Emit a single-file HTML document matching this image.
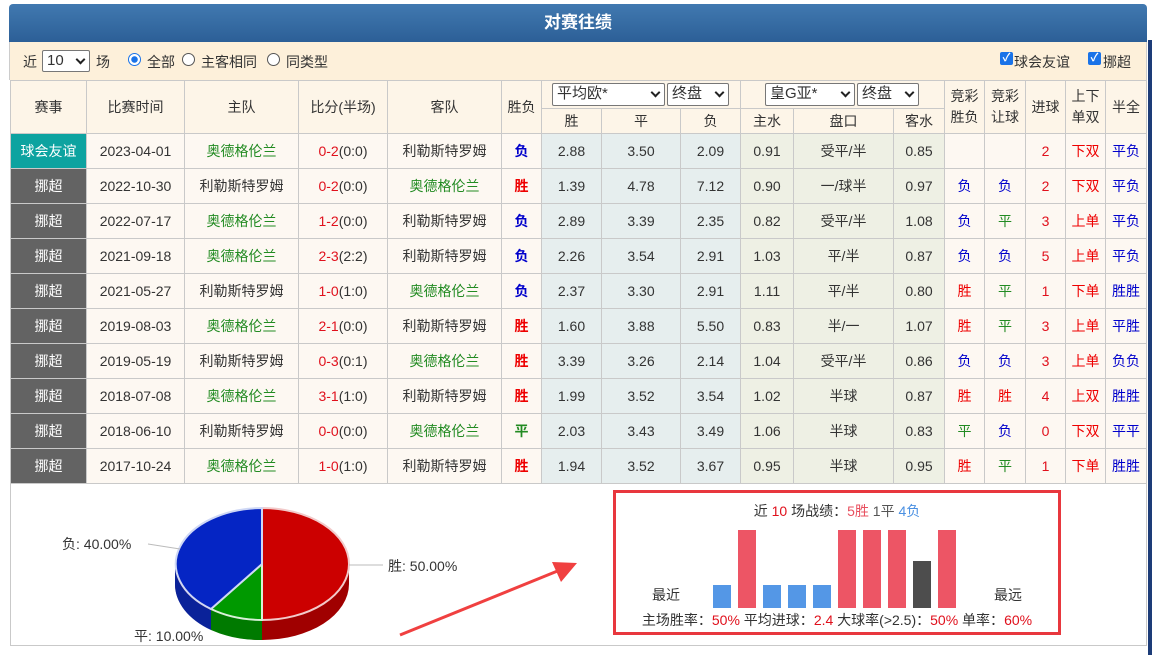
<!DOCTYPE html>
<html><head><meta charset="utf-8"><style>
*{margin:0;padding:0;box-sizing:border-box}
body{width:1152px;height:655px;background:#fff;font-family:"Liberation Sans","Noto Sans CJK SC",sans-serif;font-size:14px;color:#333;position:relative;overflow:hidden}
.strip{position:absolute;left:1148px;top:40px;width:4px;height:615px;background:#1d3c78}
.title{position:absolute;left:9px;top:4px;width:1138px;height:38px;background:linear-gradient(#4179b0,#2c5f97);border-radius:4px 4px 0 0;color:#fff;font-weight:bold;font-size:17px;text-align:center;line-height:37px}
.filter{position:absolute;left:9px;top:42px;width:1138px;height:38px;background:#fdf0da;border-left:1px solid #ccc;border-right:1px solid #ccc}
.filter span{position:absolute;top:10px;font-size:14px}
.sel{position:absolute;border:1px solid #777;background:#fff;border-radius:2px;font-size:15px;padding-left:4px;line-height:20px;height:22px;text-align:left}
.sel:after{content:"";position:absolute;right:5px;top:5px;width:5px;height:5px;border-right:2px solid #222;border-bottom:2px solid #222;transform:rotate(45deg)}
.radio{position:absolute;width:13px;height:13px;border-radius:50%;border:1px solid #555;background:#fff}
.radio.on{border:1px solid #1a73e8;background:radial-gradient(#1a73e8 3px,#fff 3.5px)}
.cb{position:absolute;width:13px;height:13px;background:#1a73e8;border-radius:2px;color:#fff;font-size:11px;line-height:13px;text-align:center;font-weight:bold}
table{position:absolute;left:10px;top:80px;border-collapse:collapse;table-layout:fixed;width:1137px}
td{border:1px solid #c9c9c9;text-align:center;font-size:14px;padding:0;white-space:nowrap;background:#fdf8f2}
tr.h td{background:#fdf5e8;color:#333}
tr.d td{height:35px}
.lg{background:#636363!important;color:#fff}
.lg2{background:#0da3a0!important;color:#fff}
.eu{background:#e6eeee!important}
.as{background:#eef0e4!important}
.g{color:#228b22}.r{color:#e00}.b{color:#00c}.rr{color:#e0101c}
.bw{font-weight:bold}
.bottom{position:absolute;left:10px;top:482px;width:1137px;height:164px;border:1px solid #c9c9c9;border-top:none}
.box{position:absolute;left:613px;top:490px;width:448px;height:145px;border:3px solid #e8373e}
.bar{position:absolute;width:18px;bottom:24px}
</style></head><body>
<div class="strip"></div>
<div class="title">对赛往绩</div>
<div class="filter">
<span style="left:13px">近</span>
<div class="sel" style="left:32px;top:8px;width:48px">10</div>
<span style="left:86px">场</span>
<div class="radio on" style="left:118px;top:11px"></div><span style="left:137px">全部</span>
<div class="radio" style="left:172px;top:11px"></div><span style="left:191px">主客相同</span>
<div class="radio" style="left:257px;top:11px"></div><span style="left:276px">同类型</span>
<div class="cb" style="left:990px;top:10px">✓</div><span style="left:1004px">球会友谊</span>
<div class="cb" style="left:1078px;top:10px">✓</div><span style="left:1093px">挪超</span>
</div>
<table>
<colgroup><col style="width:76px"><col style="width:98px"><col style="width:114px"><col style="width:89px"><col style="width:114px"><col style="width:40px"><col style="width:60px"><col style="width:79px"><col style="width:60px"><col style="width:53px"><col style="width:100px"><col style="width:51px"><col style="width:40px"><col style="width:41px"><col style="width:40px"><col style="width:40px"><col style="width:41px"></colgroup>
<tr class="h" style="height:28px"><td rowspan="2">赛事</td><td rowspan="2">比赛时间</td><td rowspan="2">主队</td><td rowspan="2">比分(半场)</td><td rowspan="2">客队</td><td rowspan="2">胜负</td>
<td colspan="3" style="position:relative"><div class="sel" style="left:10px;top:2px;width:113px;height:23px">平均欧*</div><div class="sel" style="left:125px;top:2px;width:62px;height:23px">终盘</div></td>
<td colspan="3" style="position:relative"><div class="sel" style="left:24px;top:2px;width:90px;height:23px">皇G亚*</div><div class="sel" style="left:116px;top:2px;width:62px;height:23px">终盘</div></td>
<td rowspan="2" style="line-height:21px">竞彩<br>胜负</td><td rowspan="2" style="line-height:21px">竞彩<br>让球</td><td rowspan="2">进球</td><td rowspan="2" style="line-height:21px">上下<br>单双</td><td rowspan="2">半全</td></tr>
<tr class="h" style="height:25px"><td>胜</td><td>平</td><td>负</td><td>主水</td><td>盘口</td><td>客水</td></tr>
<tr class="d"><td class="lg2">球会友谊</td><td>2023-04-01</td><td class="g">奥德格伦兰</td><td><span class="rr">0-2</span>(0:0)</td><td>利勒斯特罗姆</td><td class="b bw">负</td><td class="eu">2.88</td><td class="eu">3.50</td><td class="eu">2.09</td><td class="as">0.91</td><td class="as">受平/半</td><td class="as">0.85</td><td></td><td></td><td class="rr">2</td><td class="r">下双</td><td class="b">平负</td></tr>
<tr class="d"><td class="lg">挪超</td><td>2022-10-30</td><td>利勒斯特罗姆</td><td><span class="rr">0-2</span>(0:0)</td><td class="g">奥德格伦兰</td><td class="r bw">胜</td><td class="eu">1.39</td><td class="eu">4.78</td><td class="eu">7.12</td><td class="as">0.90</td><td class="as">一/球半</td><td class="as">0.97</td><td class="b">负</td><td class="b">负</td><td class="rr">2</td><td class="r">下双</td><td class="b">平负</td></tr>
<tr class="d"><td class="lg">挪超</td><td>2022-07-17</td><td class="g">奥德格伦兰</td><td><span class="rr">1-2</span>(0:0)</td><td>利勒斯特罗姆</td><td class="b bw">负</td><td class="eu">2.89</td><td class="eu">3.39</td><td class="eu">2.35</td><td class="as">0.82</td><td class="as">受平/半</td><td class="as">1.08</td><td class="b">负</td><td class="g">平</td><td class="rr">3</td><td class="r">上单</td><td class="b">平负</td></tr>
<tr class="d"><td class="lg">挪超</td><td>2021-09-18</td><td class="g">奥德格伦兰</td><td><span class="rr">2-3</span>(2:2)</td><td>利勒斯特罗姆</td><td class="b bw">负</td><td class="eu">2.26</td><td class="eu">3.54</td><td class="eu">2.91</td><td class="as">1.03</td><td class="as">平/半</td><td class="as">0.87</td><td class="b">负</td><td class="b">负</td><td class="rr">5</td><td class="r">上单</td><td class="b">平负</td></tr>
<tr class="d"><td class="lg">挪超</td><td>2021-05-27</td><td>利勒斯特罗姆</td><td><span class="rr">1-0</span>(1:0)</td><td class="g">奥德格伦兰</td><td class="b bw">负</td><td class="eu">2.37</td><td class="eu">3.30</td><td class="eu">2.91</td><td class="as">1.11</td><td class="as">平/半</td><td class="as">0.80</td><td class="r">胜</td><td class="g">平</td><td class="rr">1</td><td class="r">下单</td><td class="b">胜胜</td></tr>
<tr class="d"><td class="lg">挪超</td><td>2019-08-03</td><td class="g">奥德格伦兰</td><td><span class="rr">2-1</span>(0:0)</td><td>利勒斯特罗姆</td><td class="r bw">胜</td><td class="eu">1.60</td><td class="eu">3.88</td><td class="eu">5.50</td><td class="as">0.83</td><td class="as">半/一</td><td class="as">1.07</td><td class="r">胜</td><td class="g">平</td><td class="rr">3</td><td class="r">上单</td><td class="b">平胜</td></tr>
<tr class="d"><td class="lg">挪超</td><td>2019-05-19</td><td>利勒斯特罗姆</td><td><span class="rr">0-3</span>(0:1)</td><td class="g">奥德格伦兰</td><td class="r bw">胜</td><td class="eu">3.39</td><td class="eu">3.26</td><td class="eu">2.14</td><td class="as">1.04</td><td class="as">受平/半</td><td class="as">0.86</td><td class="b">负</td><td class="b">负</td><td class="rr">3</td><td class="r">上单</td><td class="b">负负</td></tr>
<tr class="d"><td class="lg">挪超</td><td>2018-07-08</td><td class="g">奥德格伦兰</td><td><span class="rr">3-1</span>(1:0)</td><td>利勒斯特罗姆</td><td class="r bw">胜</td><td class="eu">1.99</td><td class="eu">3.52</td><td class="eu">3.54</td><td class="as">1.02</td><td class="as">半球</td><td class="as">0.87</td><td class="r">胜</td><td class="r">胜</td><td class="rr">4</td><td class="r">上双</td><td class="b">胜胜</td></tr>
<tr class="d"><td class="lg">挪超</td><td>2018-06-10</td><td>利勒斯特罗姆</td><td><span class="rr">0-0</span>(0:0)</td><td class="g">奥德格伦兰</td><td class="g bw">平</td><td class="eu">2.03</td><td class="eu">3.43</td><td class="eu">3.49</td><td class="as">1.06</td><td class="as">半球</td><td class="as">0.83</td><td class="g">平</td><td class="b">负</td><td class="rr">0</td><td class="r">下双</td><td class="b">平平</td></tr>
<tr class="d"><td class="lg">挪超</td><td>2017-10-24</td><td class="g">奥德格伦兰</td><td><span class="rr">1-0</span>(1:0)</td><td>利勒斯特罗姆</td><td class="r bw">胜</td><td class="eu">1.94</td><td class="eu">3.52</td><td class="eu">3.67</td><td class="as">0.95</td><td class="as">半球</td><td class="as">0.95</td><td class="r">胜</td><td class="g">平</td><td class="rr">1</td><td class="r">下单</td><td class="b">胜胜</td></tr>
</table>
<div class="bottom"></div>
<svg style="position:absolute;left:0;top:0" width="1152" height="655">
<path d="M175,564 A87,56 0 0 0 349,564 L349,584 A87,56 0 0 1 175,584 Z" fill="#a00000"/>
<path d="M262,620 L262,640 A87,56 0 0 1 211,630 L211,610 A87,56 0 0 0 262,620Z" fill="#007a00"/>
<path d="M175,564 A87,56 0 0 0 211,610 L211,630 A87,56 0 0 1 175,584Z" fill="#0a2299"/>
<path d="M262,564 L262,508 A87,56 0 0 1 262,620 Z" fill="#cc0000" stroke="#f2caca" stroke-width="2"/>
<path d="M262,564 L262,620 A87,56 0 0 1 211,609 Z" fill="#009900" stroke="#d8f0d8" stroke-width="2"/>
<path d="M262,564 L211,609 A87,56 0 0 1 262,508 Z" fill="#0525c4" stroke="#cfd8f5" stroke-width="2"/>
<line x1="349" y1="565" x2="383" y2="565" stroke="#bbb"/>
<line x1="148" y1="544" x2="180" y2="549" stroke="#bbb"/>
<g font-family="Liberation Sans,Noto Sans CJK SC,sans-serif" font-size="14" fill="#333">
<text x="388" y="571">胜: 50.00%</text>
<text x="62" y="549">负: 40.00%</text>
<text x="134" y="641">平: 10.00%</text>
</g>
<line x1="400" y1="635" x2="560" y2="570" stroke="#f04040" stroke-width="3"/>
<path d="M577,563 L552,562 L561,582 Z" fill="#f04040"/>
</svg>
<div class="box">
<div style="position:absolute;left:0;width:100%;top:8px;text-align:center;font-size:14px">近 <span class="rr">10</span> 场战绩：<span style="color:#e8505f">5胜</span> <span style="color:#555">1平</span> <span style="color:#4a90e2">4负</span></div>
<div style="position:absolute;left:36px;top:92px">最近</div>
<div style="position:absolute;left:378px;top:92px">最远</div>
<div class="bar" style="left:97px;height:23px;background:#5497e6"></div>
<div class="bar" style="left:122px;height:78px;background:#ed5565"></div>
<div class="bar" style="left:147px;height:23px;background:#5497e6"></div>
<div class="bar" style="left:172px;height:23px;background:#5497e6"></div>
<div class="bar" style="left:197px;height:23px;background:#5497e6"></div>
<div class="bar" style="left:222px;height:78px;background:#ed5565"></div>
<div class="bar" style="left:247px;height:78px;background:#ed5565"></div>
<div class="bar" style="left:272px;height:78px;background:#ed5565"></div>
<div class="bar" style="left:297px;height:47px;background:#4d4d4d"></div>
<div class="bar" style="left:322px;height:78px;background:#ed5565"></div>
<div style="position:absolute;left:0;width:100%;top:117px;text-align:center;font-size:14px;white-space:nowrap">主场胜率：<span class="rr">50%</span> 平均进球：<span class="rr">2.4</span> 大球率(&gt;2.5)：<span class="rr">50%</span> 单率：<span class="rr">60%</span></div>
</div>
</body></html>
